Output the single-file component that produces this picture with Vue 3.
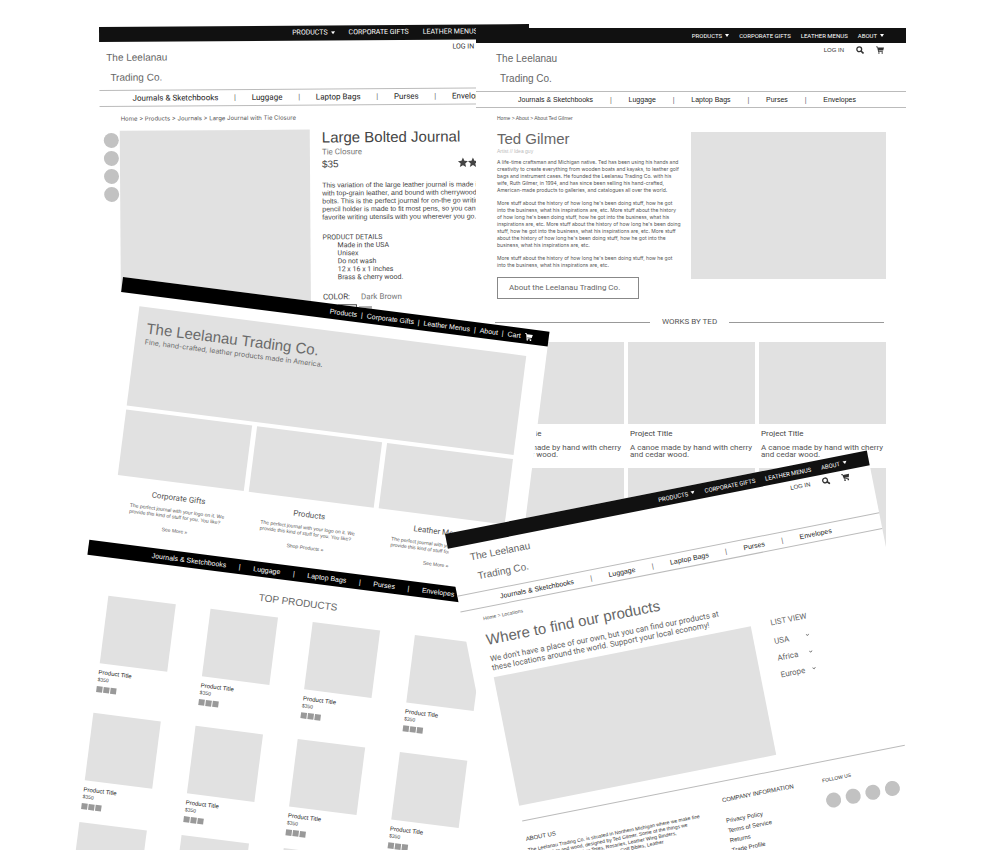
<script setup>
const mainMenu = [
  { label: 'PRODUCTS', caret: true },
  { label: 'CORPORATE GIFTS' },
  { label: 'LEATHER MENUS' },
  { label: 'ABOUT', caret: true }
]
const categories = ['Journals & Sketchbooks', 'Luggage', 'Laptop Bags', 'Purses', 'Envelopes']
const shopSheets = [
  { id: 'product', crumbs: ['Home', 'Products', 'Journals', 'Large Journal with Tie Closure'] },
  { id: 'about', crumbs: ['Home', 'About', 'About Ted Gilmer'] },
  { id: 'locations', crumbs: ['Home', 'Locations'] }
]

const description = `This variation of the large leather journal is made in
with top-grain leather, and bound with cherrywood and
bolts. This is the perfect journal for on-the go writing
pencil holder is made to fit most pens, so you can bring
favorite writing utensils with you wherever you go.`
const details = ['Made in the USA', 'Unisex', 'Do not wash', '12 x 16 x 1 inches', 'Brass & cherry wood.']

const bio = [
  `A life-time craftsman and Michigan native. Ted has been using his hands and
creativity to create everything from wooden boats and kayaks, to leather golf
bags and instrument cases. He founded the Leelanau Trading Co. with his
wife, Ruth Gilmer, in 1994, and has since been selling his hand-crafted,
American-made products to galleries, and catalogues all over the world.`,
  `More stuff about the history of how long he's been doing stuff, how he got
into the business, what his inspirations are, etc. More stuff about the history
of how long he's been doing stuff, how he got into the business, what his
inspirations are, etc. More stuff about the history of how long he's been doing
stuff, how he got into the business, what his inspirations are, etc. More stuff
about the history of how long he's been doing stuff, how he got into the
business, what his inspirations are, etc.`,
  `More stuff about the history of how long he's been doing stuff, how he got
into the business, what his inspirations are, etc.`
]

const homeMenu = ['Products', 'Corporate Gifts', 'Leather Menus', 'About', 'Cart']
const features = [
  { title: 'Corporate Gifts', more: 'See More »' },
  { title: 'Products', more: 'Shop Products »' },
  { title: 'Leather Menus', more: 'See More »' }
]
const regions = ['USA', 'Africa', 'Europe']
const company = ['Privacy Policy', 'Terms of Service', 'Returns', 'Trade Profile']
const aboutUs = `The Leelanau Trading Co. is situated in Northern Michigan where we make fine
quality leather and wood, designed by Ted Gilmer. Some of the things we
make are Journals, Leather Totes, Rosaries, Leather Wing Binders,
Wallets, Passport Cases, Laptop Cases, Golf Bibles, Leather
Menus and Custom Packaging Assortments.`
</script>

<template>
  <main class="stage">
    <article v-for="sheet in shopSheets" :key="sheet.id" class="sheet" :class="sheet.id">
      <header>
        <nav class="menu" aria-label="Main">
          <a v-for="item in mainMenu" :key="item.label" href="#">
            {{ item.label }}<i v-if="item.caret" class="caret"></i>
          </a>
        </nav>
        <div class="masthead">
          <a href="#" class="logo"><span>The Leelanau</span><span class="second">Trading Co.</span></a>
          <div class="tools">
            <a href="#">LOG IN</a>
            <button type="button" aria-label="Search">
              <svg viewBox="0 0 16 16" class="icon"><circle cx="6.5" cy="6.5" r="4.8" fill="none" stroke="currentColor" stroke-width="2.6" /><path d="M10 10l5 5" stroke="currentColor" stroke-width="3.2" /></svg>
            </button>
            <button type="button" aria-label="Cart">
              <svg viewBox="0 0 16 16" class="icon"><path d="M0 1h3.4l.4 1.8H16l-1.6 6.4H5.4l.3 1.4h8v1.6H4.4L2.3 2.6H0z" fill="currentColor" /><circle cx="5.8" cy="14" r="1.6" fill="currentColor" /><circle cx="12.4" cy="14" r="1.6" fill="currentColor" /></svg>
            </button>
          </div>
        </div>
        <nav class="categories" aria-label="Categories">
          <template v-for="(name, i) in categories" :key="name">
            <span v-if="i" class="bar">|</span>
            <a href="#">{{ name }}</a>
          </template>
        </nav>
        <p class="crumbs">{{ sheet.crumbs.join(' > ') }}</p>
      </header>

      <section v-if="sheet.id === 'product'" class="product-body">
        <div class="thumbs"><span v-for="n in 4" :key="n" class="dot"></span></div>
        <div class="photo"></div>
        <div class="info">
          <h1>Large Bolted Journal</h1>
          <p class="variant">Tie Closure</p>
          <div class="price-row">
            <span class="price">$35</span>
            <span class="stars">
              <svg v-for="n in 5" :key="n" viewBox="0 0 20 20" class="star"><path d="M10 0l2.9 6.7 7.1.6-5.4 4.8 1.7 7.1L10 15.4l-6.3 3.8 1.7-7.1L0 7.300l7.100-.6z" fill="currentColor" /></svg>
            </span>
          </div>
          <p class="description">{{ description }}</p>
          <h2>PRODUCT DETAILS</h2>
          <ul><li v-for="d in details" :key="d">{{ d }}</li></ul>
          <p class="colour"><span>COLOR:</span><span class="chosen">Dark Brown</span></p>
          <div class="swatches"><span class="swatch picked"></span><span class="swatch"></span></div>
        </div>
      </section>

      <section v-else-if="sheet.id === 'about'" class="about-body">
        <div class="profile">
          <div class="bio">
            <h1>Ted Gilmer</h1>
            <p class="role">Artist // Idea guy</p>
            <p v-for="(text, i) in bio" :key="i" class="para">{{ text }}</p>
            <button type="button" class="outlined">About the Leelanau Trading Co.</button>
          </div>
          <div class="portrait"></div>
        </div>
        <h2 class="divider">WORKS BY TED</h2>
        <div class="works">
          <figure v-for="n in 6" :key="n">
            <div class="work"></div>
            <figcaption>
              <h3>Project Title</h3>
              <p>A canoe made by hand with cherry<br />and cedar wood.</p>
            </figcaption>
          </figure>
        </div>
      </section>

      <section v-else class="locations-body">
        <div class="finder">
          <div class="where">
            <h1>Where to find our products</h1>
            <p>We don't have a place of our own, but you can find our products at<br />these locations around the world. Support your local economy!</p>
            <div class="map"></div>
          </div>
          <div class="list">
            <h2>LIST VIEW</h2>
            <button v-for="r in regions" :key="r" type="button">
              {{ r }}
              <svg viewBox="0 0 8 6" class="chevron"><path d="M1 1l3 3 3-3" fill="none" stroke="currentColor" stroke-width="1.6" /></svg>
            </button>
          </div>
        </div>
        <footer>
          <div>
            <h2>ABOUT US</h2>
            <p class="small">{{ aboutUs }}</p>
          </div>
          <div>
            <h2>COMPANY INFORMATION</h2>
            <a v-for="c in company" :key="c" href="#">{{ c }}</a>
          </div>
          <div>
            <h2 class="follow">FOLLOW US</h2>
            <div class="social"><span v-for="n in 4" :key="n" class="dot"></span></div>
          </div>
        </footer>
      </section>
    </article>

    <article class="sheet home">
      <nav class="home-menu" aria-label="Main">
        <template v-for="(name, i) in homeMenu" :key="name">
          <span v-if="i">|</span>
          <a href="#">{{ name }}</a>
        </template>
        <svg viewBox="0 0 16 16" class="icon"><path d="M0 1h3.4l.4 1.8H16l-1.6 6.4H5.4l.3 1.4h8v1.6H4.4L2.3 2.6H0z" fill="currentColor" /><circle cx="5.8" cy="14" r="1.6" fill="currentColor" /><circle cx="12.4" cy="14" r="1.6" fill="currentColor" /></svg>
      </nav>
      <section class="hero">
        <h1>The Leelanau Trading Co.</h1>
        <p>Fine, hand-crafted, leather products made in America.</p>
      </section>
      <section class="features">
        <div v-for="f in features" :key="f.title" class="feature">
          <div class="banner"></div>
          <h2>{{ f.title }}</h2>
          <p>The perfect journal with your logo on it. We<br />provide this kind of stuff for you. You like?</p>
          <a href="#">{{ f.more }}</a>
        </div>
      </section>
      <nav class="home-categories" aria-label="Categories">
        <template v-for="(name, i) in categories" :key="name">
          <span v-if="i">|</span>
          <a href="#">{{ name }}</a>
        </template>
      </nav>
      <h2 class="top">TOP PRODUCTS</h2>
      <section class="goods">
        <div v-for="n in 12" :key="n" class="good">
          <div class="pic"></div>
          <h3>Product Title</h3>
          <p>$350</p>
          <div class="chips"><span></span><span></span><span></span></div>
        </div>
      </section>
    </article>
  </main>
</template>

<style>
body {
  background: #fff;
}
</style>

<style scoped>
.stage {
  position: relative;
  min-height: 100vh;
  overflow: hidden;
  font-family: "Liberation Sans", Arial, sans-serif;
  color: #444;
}
.stage * {
  box-sizing: border-box;
}
h1, h2, h3, p, ul, figure {
  margin: 0;
  padding: 0;
  font-weight: 400;
  list-style: none;
}
a {
  color: inherit;
  text-decoration: none;
}
button {
  padding: 0;
  border: 0;
  background: none;
  color: inherit;
  font: inherit;
}

/* Sheets scattered over the canvas */
.sheet {
  position: absolute;
  width: 430px;
  background: #fff;
  transform-origin: 0 0;
  white-space: nowrap;
}
.product {
  left: 99px;
  top: 27px;
  z-index: 1;
  transform: rotate(-0.4deg);
}
.about {
  left: 476px;
  top: 28px;
  z-index: 2;
}
.home {
  left: 123px;
  top: 277px;
  z-index: 3;
  transform: rotate(7.3deg);
}
.locations {
  left: 445px;
  top: 534px;
  z-index: 4;
  transform: rotate(-11.2deg);
}

/* Shop header */
.menu {
  display: flex;
  justify-content: flex-end;
  align-items: center;
  gap: 10px;
  height: 15px;
  padding-right: 22px;
  background: #111;
  color: #fff;
  font: 6px/15px Roboto, sans-serif;
}
.menu a {
  display: flex;
  align-items: center;
  gap: 3px;
}
.caret {
  border: 2px solid transparent;
  border-top: 3px solid #fff;
  border-bottom: 0;
}
.product .menu {
  gap: 14px;
  padding-right: 8px;
  font-size: 7px;
}
.masthead {
  display: flex;
  justify-content: space-between;
  height: 48px;
  padding: 6px 22px 0 20px;
}
.product .masthead {
  padding: 6px 15px 0 7px;
}
.logo {
  display: flex;
  flex-direction: column;
  color: #666;
  font-size: 10px;
  line-height: 20px;
}
.locations .masthead {
  padding-top: 3px;
}
.second {
  padding-left: 4px;
}
.tools {
  display: flex;
  gap: 12px;
  align-items: center;
  height: 8px;
  margin-top: -3px;
  font-size: 6px;
  line-height: 8px;
  color: #333;
}
.product .tools {
  font: 7px/8px Roboto, sans-serif;
}
.locations .tools {
  margin-top: 0;
}
.tools button {
  display: flex;
}
.icon {
  width: 8px;
  height: 8px;
}
.categories {
  display: flex;
  justify-content: space-between;
  height: 17px;
  padding: 0 50px 0 42px;
  border: solid #bbb;
  border-width: 1px 0;
  color: #222;
  font-size: 7px;
  line-height: 16px;
}
.product .categories {
  padding: 0 41px 0 33px;
  font: 8px/15px Roboto, sans-serif;
}
.bar {
  color: #666;
}
.crumbs {
  padding: 7px 0 0 21px;
  color: #555;
  font-size: 5px;
  line-height: 6px;
}
.product .crumbs {
  padding-top: 8px;
  font: 6px/8px Inter, sans-serif;
}

/* Product sheet */
.product-body {
  display: flex;
  min-height: 240px;
  padding: 8px 0 0 4px;
}
.thumbs {
  display: flex;
  flex-direction: column;
  gap: 3px;
  padding-top: 2px;
}
.dot {
  width: 15px;
  height: 15px;
  border-radius: 50%;
  background: #c2c2c2;
}
.photo {
  width: 190px;
  height: 190px;
  margin: 0 12px 0 1px;
  background: #e1e1e1;
}
.info h1 {
  font-size: 15px;
  line-height: 16px;
}
.variant {
  padding-top: 2px;
  color: #777;
  font: 8px/10px Roboto, sans-serif;
}
.price-row {
  display: flex;
  justify-content: space-between;
  width: 186px;
  font-size: 10px;
  line-height: 14px;
}
.stars {
  display: flex;
}
.star {
  width: 10px;
  height: 12px;
}
.description {
  padding-top: 10px;
  font-size: 7px;
  line-height: 8px;
  white-space: pre;
}
.info h2 {
  padding-top: 12px;
  font: 7px/8px Roboto, sans-serif;
}
.info ul {
  padding-left: 15px;
  font: 7px/8px Roboto, sans-serif;
}
.colour {
  display: flex;
  gap: 11px;
  padding-top: 11px;
  font: 8px/10px Roboto, sans-serif;
}
.chosen {
  color: #777;
}
.swatches {
  display: flex;
  gap: 2px;
  align-items: center;
  padding: 2px 0 0 15px;
}
.swatch {
  width: 13px;
  height: 13px;
  background: #aaa;
}
.picked {
  width: 19px;
  height: 17px;
  border: 1px solid #444;
  background: #fff;
}

/* About sheet */
.about-body {
  padding: 8px 20px 0 21px;
}
.profile {
  display: flex;
  justify-content: space-between;
  color: #555;
}
.bio h1 {
  color: #666;
  font-size: 15px;
  line-height: 19px;
}
.role {
  padding-bottom: 5px;
  color: #bbb;
  font-size: 5px;
  line-height: 6px;
}
.para {
  padding-bottom: 6px;
  font: 5px/7px Inter, sans-serif;
  white-space: pre;
}
.outlined {
  width: 142px;
  height: 22px;
  margin-top: 2px;
  padding-left: 11px;
  border: 1px solid #888;
  color: #666;
  font: 8px/20px Roboto, sans-serif;
  text-align: left;
}
.portrait {
  flex-shrink: 0;
  width: 195px;
  height: 147px;
  margin-top: 3px;
  background: #e1e1e1;
}
.divider {
  display: flex;
  align-items: center;
  gap: 12px;
  margin: 18px 2px 15px -2px;
  color: #555;
  font: 8px/10px Roboto, sans-serif;
}
.divider::before,
.divider::after {
  content: "";
  flex: 1;
  height: 1px;
  background: #999;
}
.works {
  display: grid;
  grid-template-columns: repeat(3, 1fr);
  gap: 10px 4px;
}
.work {
  height: 82px;
  background: #e1e1e1;
}
figcaption {
  padding: 6px 0 0 2px;
  color: #555;
  font: 8px/7px Roboto, sans-serif;
}
figcaption h3 {
  padding-bottom: 6px;
  color: #444;
  font-size: 8px;
  line-height: 8px;
}

/* Home sheet */
.home-menu {
  display: flex;
  justify-content: flex-end;
  align-items: center;
  gap: 4px;
  height: 15px;
  padding-right: 16px;
  background: #000;
  color: #fff;
  font-size: 7px;
}
.hero {
  height: 100px;
  margin: 12px 20px 4px;
  padding: 12px 10px;
  background: #e1e1e1;
  color: #6a6a6a;
}
.hero h1 {
  font-size: 15px;
  line-height: 18px;
}
.hero p {
  font: 7px/9px Inter, sans-serif;
}
.features {
  display: grid;
  grid-template-columns: repeat(3, 1fr);
  gap: 5px;
  margin: 0 20px;
}
.feature {
  display: flex;
  flex-direction: column;
  align-items: center;
  height: 134px;
  color: #555;
  font-size: 5px;
  line-height: 6px;
}
.banner {
  align-self: stretch;
  height: 66px;
  background: #e1e1e1;
}
.feature h2 {
  padding: 11px 0 4px;
  font: 8px/10px Roboto, sans-serif;
}
.feature p {
  padding-bottom: 8px;
}
.home-categories {
  display: flex;
  justify-content: space-between;
  height: 15px;
  padding: 0 61px 0 64px;
  background: #000;
  color: #fff;
  font-size: 7px;
  line-height: 15px;
}
.top {
  padding: 14px 0 11px;
  color: #666;
  font-size: 10px;
  line-height: 13px;
  text-align: center;
}
.goods {
  display: grid;
  grid-template-columns: repeat(4, 68px);
  grid-template-rows: 118px 110px 118px;
  column-gap: 35px;
  padding-left: 26px;
}
.pic {
  height: 68px;
  background: #e1e1e1;
}
.good h3 {
  padding-top: 5px;
  color: #222;
  font-size: 6px;
  line-height: 8px;
}
.good p {
  font-size: 5px;
  line-height: 6px;
}
.chips {
  display: flex;
  gap: 1px;
  padding-top: 4px;
}
.chips span {
  width: 6px;
  height: 6px;
  background: #999;
}

/* Locations sheet */
.locations-body {
  min-height: 420px;
  padding: 9px 20px 0;
}
.finder {
  display: flex;
  gap: 20px;
  padding-bottom: 15px;
  border-bottom: 1px solid #bbb;
  color: #666;
  font: 8px/9px Roboto, sans-serif;
}
.where {
  width: 262px;
}
.where h1 {
  padding-bottom: 5px;
  font: 15px/20px "Liberation Sans", Arial, sans-serif;
}
.map {
  height: 131px;
  margin-top: 5px;
  background: #e1e1e1;
}
.list {
  width: 36px;
  padding-top: 44px;
}
.list h2 {
  padding-bottom: 6px;
  font-size: 8px;
  line-height: 9px;
}
.list button {
  display: flex;
  align-items: center;
  justify-content: space-between;
  width: 36px;
  height: 17px;
}
.chevron {
  width: 4px;
  height: 3px;
}
footer {
  display: grid;
  grid-template-columns: 200px 102px auto;
  padding-top: 14px;
  font-size: 6px;
  line-height: 10px;
  color: #333;
}
footer h2 {
  font-size: 6px;
  line-height: 8px;
}
footer .follow {
  font-size: 5px;
}
footer a {
  display: block;
}
footer h2 + a {
  margin-top: 12px;
}
.small {
  padding-top: 4px;
  font-size: 5px;
  line-height: 6px;
  white-space: pre;
}
.social {
  display: flex;
  gap: 5px;
  padding-top: 10px;
}
</style>
